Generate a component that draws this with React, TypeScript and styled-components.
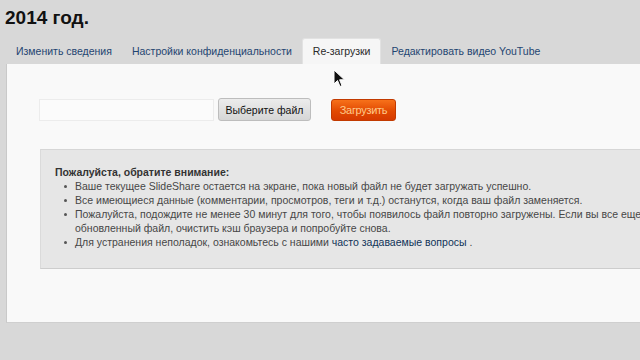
import React from "react";
import styled, { createGlobalStyle } from "styled-components";

const Global = createGlobalStyle`
  html, body { margin: 0; padding: 0; }
  body {
    background: #d8d8d8;
    font-family: "Liberation Sans", Arial, sans-serif;
    width: 640px;
    height: 360px;
    overflow: hidden;
  }
`;

const Page = styled.div`
  position: relative;
  width: 640px;
  height: 360px;
  overflow: hidden;
`;

const Title = styled.h1`
  margin: 0;
  padding: 6px 0 0 5px;
  height: 33px;
  box-sizing: border-box;
  font-size: 19px;
  font-weight: bold;
  line-height: 24px;
  color: #111;
`;

const TabBar = styled.ul`
  list-style: none;
  margin: 6px 0 0 0;
  padding: 0 0 0 6px;
  display: flex;
  height: 25px;
`;

const Tab = styled.li<{ $active?: boolean }>`
  padding: 0 10px;
  font-size: 10.5px;
  line-height: 25px;
  color: ${(p) => (p.$active ? "#2a2a2a" : "#1f4571")};
  background: ${(p) => (p.$active ? "#f6f6f6" : "transparent")};
  border-radius: 3px 3px 0 0;
  ${(p) => (p.$active ? "border: 1px solid #e2e2e2; border-bottom: none; margin-top: -1px; height: 26px; box-sizing: border-box;" : "")}
  white-space: nowrap;
`;

const Panel = styled.div`
  margin-left: 6px;
  width: 700px;
  height: 259px;
  box-sizing: border-box;
  background: #f9f9f9;
  border-left: 1px solid #c9c9c9;
  border-bottom: 1px solid #cfcfcf;
  padding: 34px 0 0 32px;
`;

const FormRow = styled.div`
  display: flex;
  align-items: center;
`;

const FileInput = styled.div`
  width: 175px;
  height: 22px;
  box-sizing: border-box;
  background: #fbfbfb;
  border: 1px solid #ececec;
`;

const ChooseButton = styled.button`
  margin-left: 4px;
  width: 93px;
  height: 23px;
  box-sizing: border-box;
  border: 1px solid #bdbdbd;
  border-radius: 3px;
  background: linear-gradient(#ececec, #d6d6d6);
  font-family: "Liberation Sans", Arial, sans-serif;
  font-size: 10.5px;
  color: #111;
  padding: 0;
`;

const UploadButton = styled.button`
  margin-left: 20px;
  width: 65px;
  height: 22px;
  box-sizing: border-box;
  border: 1px solid #c23a00;
  border-radius: 3px;
  background: linear-gradient(#f7711a, #e24a02 55%, #d63a00);
  font-family: "Liberation Sans", Arial, sans-serif;
  font-size: 11px;
  color: #ffc98a;
  padding: 0;
  letter-spacing: -0.3px;
`;

const Notice = styled.div`
  margin: 28px 0 0 1px;
  height: 120px;
  box-sizing: border-box;
  background: #e6e6e6;
  border-top: 1px solid #d6d6d6;
  border-left: 1px solid #dadada;
  border-bottom: 1px solid #cdcdcd;
  padding: 15px 0 0 14px;
  font-size: 10.5px;
  line-height: 14px;
  color: #464646;
`;

const NoticeTitle = styled.div`
  font-weight: bold;
  color: #333;
`;

const List = styled.ul`
  margin: 0;
  padding: 0 0 0 20px;
  list-style: none;
`;

const Item = styled.li`
  position: relative;
  white-space: nowrap;
  &::before {
    content: "";
    position: absolute;
    left: -11px;
    top: 6px;
    width: 3px;
    height: 3px;
    border-radius: 50%;
    background: #555;
  }
`;

const Link = styled.a`
  color: #0f3358;
  text-decoration: none;
`;

const Cursor = styled.svg`
  position: absolute;
  left: 333px;
  top: 69px;
`;

export default function App() {
  return (
    <Page>
      <Global />
      <Title>2014 год.</Title>
      <TabBar>
        <Tab>Изменить сведения</Tab>
        <Tab>Настройки конфиденциальности</Tab>
        <Tab $active>Re-загрузки</Tab>
        <Tab>Редактировать видео YouTube</Tab>
      </TabBar>
      <Panel>
        <FormRow>
          <FileInput />
          <ChooseButton>Выберите файл</ChooseButton>
          <UploadButton>Загрузить</UploadButton>
        </FormRow>
        <Notice>
          <NoticeTitle>Пожалуйста, обратите внимание:</NoticeTitle>
          <List>
            <Item>Ваше текущее SlideShare остается на экране, пока новый файл не будет загружать успешно.</Item>
            <Item>Все имеющиеся данные (комментарии, просмотров, теги и т.д.) останутся, когда ваш файл заменяется.</Item>
            <Item>
              Пожалуйста, подождите не менее 30 минут для того, чтобы появилось файл повторно загружены. Если вы все еще
              <br />
              обновленный файл, очистить кэш браузера и попробуйте снова.
            </Item>
            <Item>
              Для устранения неполадок, ознакомьтесь с нашими <Link href="#">часто задаваемые вопросы</Link> .
            </Item>
          </List>
        </Notice>
      </Panel>
      <Cursor width="13" height="19" viewBox="0 0 13 19">
        <path d="M1 1 L1 15 L4.5 11.5 L7 17.5 L9 16.6 L6.6 10.8 L11.5 10.8 Z" fill="#111" stroke="#fff" strokeWidth="1" strokeLinejoin="round" />
      </Cursor>
    </Page>
  );
}
